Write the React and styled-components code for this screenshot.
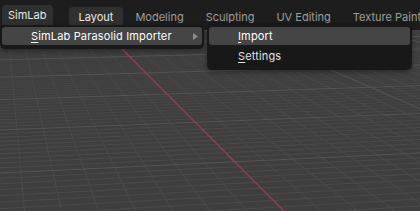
import React from 'react';
import styled, { createGlobalStyle } from 'styled-components';

const GlobalStyle = createGlobalStyle`
  html, body {
    margin: 0;
    padding: 0;
    background: #3e3e3e;
  }
  body {
    font-family: Inter, 'Noto Sans', sans-serif;
  }
`;

const Screen = styled.div`
  position: relative;
  width: 420px;
  height: 211px;
  overflow: hidden;
  display: flex;
  flex-direction: column;
  font-size: 11px;
  color: #e6e6e6;
`;

const TopBar = styled.div`
  flex: none;
  height: 30px;
  display: flex;
  align-items: flex-end;
  padding-left: 2px;
  background: #1d1d1d;
  white-space: nowrap;
`;

const MenuButton = styled.div`
  height: 20px;
  margin-bottom: 5px;
  padding: 0 6px;
  display: flex;
  align-items: center;
  border-radius: 4px 4px 0 0;
  background: ${({ open }) => (open ? '#303030' : 'transparent')};
  color: #e6e6e6;
`;

const Tabs = styled.div`
  display: flex;
  gap: 2px;
  margin-left: 16px;
`;

const Tab = styled.div`
  height: 23px;
  padding: 0 10px 3px;
  box-sizing: border-box;
  display: flex;
  align-items: center;
  border-radius: 4px 4px 0 0;
  background: ${({ active }) => (active ? '#303030' : 'transparent')};
  color: ${({ active }) => (active ? '#ececec' : '#9d9d9d')};
`;

const Viewport = styled.div`
  position: relative;
  flex: 1;
  background: #3e3e3e;
  overflow: hidden;
`;

const GridCanvas = styled.svg`
  position: absolute;
  inset: 0;
  display: block;
`;

const PopupLayer = styled.div`
  position: absolute;
  top: 23px;
  left: 0;
  display: flex;
  align-items: flex-start;
  gap: 3px;
`;

const Menu = styled.div`
  box-sizing: border-box;
  width: ${({ w }) => w}px;
  margin-top: ${({ offset }) => offset}px;
  padding: ${({ pad }) => pad};
  display: flex;
  flex-direction: column;
  gap: 2px;
  background: #181818;
  border-radius: 5px;
  box-shadow: 0 2px 5px rgba(0, 0, 0, 0.35);
`;

const Item = styled.div`
  height: 18px;
  padding: 0 4px 0 29px;
  display: flex;
  align-items: center;
  justify-content: space-between;
  border-radius: 3px;
  letter-spacing: 0.15px;
  background: ${({ active }) => (active ? '#454545' : 'transparent')};
  color: ${({ active }) => (active ? '#ffffff' : '#e2e2e2')};
`;

const Key = styled.span`
  text-decoration: underline;
  text-underline-offset: 2px;
  text-decoration-thickness: 1px;
`;

const Arrow = () => (
  <svg width="5" height="7" viewBox="0 0 5 7">
    <polygon points="0,0 5,3.5 0,7" fill="#8c8c8c" />
  </svg>
);

// perspective grid on the ground plane (X runs along the red axis)
const O = [234.8, 161.8];
const VA = [-2, -75];
const VB = [5200, -75];
const sA = 0.02002;
const sB = 0.0059;

const proj = (X, Y) => {
  const w = 1 + sA * X + sB * Y;
  return [
    (O[0] + sA * X * VA[0] + sB * Y * VB[0]) / w,
    (O[1] + sA * X * VA[1] + sB * Y * VB[1]) / w,
  ];
};

const seg = (a, b) => `M${a[0].toFixed(2)} ${a[1].toFixed(2)}L${b[0].toFixed(2)} ${b[1].toFixed(2)}`;

const buildGrid = () => {
  const rows = [];
  const cols = [];
  const major = [];
  for (let Y = -18; Y <= 32; Y++) {
    if (Y === 0) continue;
    const d = seg(proj(-30, Y), proj(90, Y));
    (Y % 10 === 0 ? major : cols).push(d);
  }
  for (let X = -30; X <= 90; X++) {
    const d = seg(proj(X, -18), proj(X, 32));
    (X % 10 === 0 ? major : rows).push(d);
  }
  return {
    rows: rows.join(''),
    cols: cols.join(''),
    major: major.join(''),
    axis: seg(proj(-30, 0), proj(90, 0)),
  };
};

const grid = buildGrid();

const Grid = () => (
  <GridCanvas width="420" height="181" viewBox="0 30 420 181">
    <defs>
      <linearGradient id="fadeRows" x1="0" y1="30" x2="0" y2="211" gradientUnits="userSpaceOnUse">
        <stop offset="0.05" stopColor="#fff" stopOpacity="0" />
        <stop offset="0.35" stopColor="#fff" stopOpacity="0.6" />
        <stop offset="0.6" stopColor="#fff" stopOpacity="1" />
      </linearGradient>
      <linearGradient id="fadeCols" x1="0" y1="30" x2="0" y2="211" gradientUnits="userSpaceOnUse">
        <stop offset="0" stopColor="#fff" stopOpacity="0.45" />
        <stop offset="0.4" stopColor="#fff" stopOpacity="1" />
      </linearGradient>
      <mask id="rowMask" maskUnits="userSpaceOnUse" x="0" y="30" width="420" height="181">
        <rect x="0" y="30" width="420" height="181" fill="url(#fadeRows)" />
      </mask>
      <mask id="colMask" maskUnits="userSpaceOnUse" x="0" y="30" width="420" height="181">
        <rect x="0" y="30" width="420" height="181" fill="url(#fadeCols)" />
      </mask>
    </defs>
    <path d={grid.rows} stroke="#4b4b4b" strokeWidth="1" fill="none" mask="url(#rowMask)" />
    <path d={grid.cols} stroke="#4b4b4b" strokeWidth="1" fill="none" mask="url(#colMask)" />
    <path d={grid.major} stroke="#555555" strokeWidth="1" fill="none" />
    <path d={grid.axis} stroke="#9a3b4c" strokeWidth="1.4" fill="none" />
  </GridCanvas>
);

const tabs = ['Layout', 'Modeling', 'Sculpting', 'UV Editing', 'Texture Paint'];

export default function App() {
  return (
    <>
      <GlobalStyle />
      <Screen>
        <TopBar>
          <MenuButton open>SimLab</MenuButton>
          <Tabs>
            {tabs.map((t, i) => (
              <Tab key={t} active={i === 0}>{t}</Tab>
            ))}
          </Tabs>
        </TopBar>
        <Viewport>
          <Grid />
        </Viewport>
        <PopupLayer>
          <Menu w={204} offset={2} pad="2px 2px 4px">
            <Item active>
              <span><Key>S</Key>imLab Parasolid Importer</span>
              <Arrow />
            </Item>
          </Menu>
          <Menu w={205} offset={0} pad="4px 2px 5px">
            <Item active>
              <span><Key>I</Key>mport</span>
            </Item>
            <Item>
              <span><Key>S</Key>ettings</span>
            </Item>
          </Menu>
        </PopupLayer>
      </Screen>
    </>
  );
}
